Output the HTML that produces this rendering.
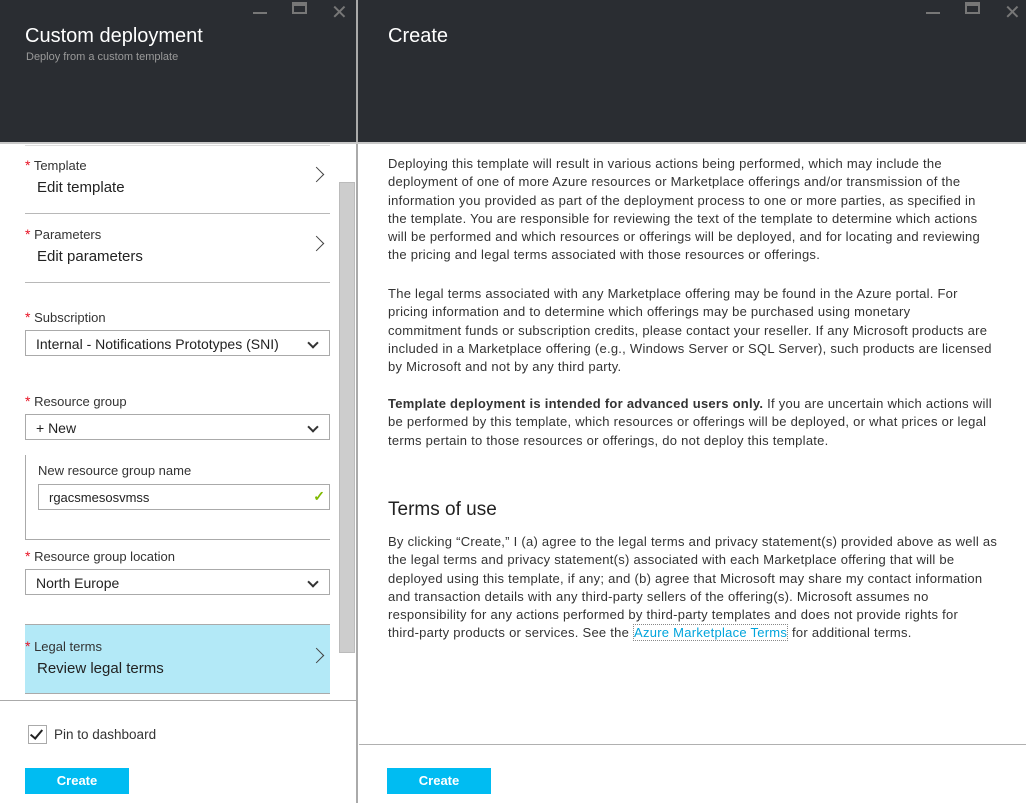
<!DOCTYPE html>
<html><head><meta charset="utf-8"><style>
*{margin:0;padding:0;box-sizing:border-box}
body{width:1026px;height:803px;position:relative;overflow:hidden;background:#fff;font-family:"Liberation Sans",sans-serif;color:#222}
.a{position:absolute}
.hdr{background:#2a2d32;top:0;height:142px}
.t{color:#fff;font-size:20px;white-space:nowrap}
.lbl{font-size:13px;color:#333;white-space:nowrap}
.big{font-size:15px;color:#222;white-space:nowrap}
.star{color:#e81123;font-size:14px}
.sep{height:1px;background:#b8b8b8;left:25px;width:305px}
.dd{left:25px;width:305px;height:26px;border:1px solid #aaa;font-size:14px;padding:5px 0 0 10px;white-space:nowrap;color:#222}
.chev{position:absolute;right:12px;top:8px;width:8px;height:8px;border-right:2px solid #333;border-bottom:2px solid #333;transform:rotate(45deg)}
.arr{position:absolute;width:11px;height:11px;border-right:1px solid #444;border-top:1px solid #444;transform:rotate(45deg)}
.p{left:388px;font-size:13px;letter-spacing:0.26px;line-height:18.3px;color:#333;white-space:nowrap}
.btn{background:#00bcf2;color:#fff;font-size:13px;font-weight:bold;text-align:center;line-height:26px;width:104px;height:26px}
</style></head><body>
<div class="a hdr" style="left:0;width:356px"></div>
<div class="a hdr" style="left:358px;width:668px"></div>
<div class="a" style="left:356px;top:0;width:2px;height:803px;background:#aaa"></div>
<div class="a" style="left:0;top:142px;width:1026px;height:2px;background:#c8c8c8"></div>
<div class="a" style="left:253px;top:12px;width:14px;height:2px;background:#777"></div>
<div class="a" style="left:292px;top:2px;width:15px;height:12px;border:2px solid #777;border-top-width:4px"></div>
<div class="a" style="left:331px;top:0;color:#777;font-size:20px">✕</div>
<div class="a" style="left:926px;top:12px;width:14px;height:2px;background:#777"></div>
<div class="a" style="left:965px;top:2px;width:15px;height:12px;border:2px solid #777;border-top-width:4px"></div>
<div class="a" style="left:1004px;top:0;color:#777;font-size:20px">✕</div>

<div class="a t" style="left:25px;top:25px">Custom deployment</div>
<div class="a" style="left:26px;top:51px;color:#9a9a9a;font-size:11px">Deploy from a custom template</div>
<div class="a t" style="left:388px;top:25px">Create</div>

<div class="a sep" style="top:145px;background:#ddd"></div>
<div class="a lbl" style="left:25px;top:157px"><span class="star">*</span> Template</div>
<div class="a big" style="left:37px;top:179px">Edit template</div>
<div class="arr" style="left:311px;top:169px"></div>
<div class="a sep" style="top:213px"></div>
<div class="a lbl" style="left:25px;top:226px"><span class="star">*</span> Parameters</div>
<div class="a big" style="left:37px;top:248px">Edit parameters</div>
<div class="arr" style="left:311px;top:238px"></div>
<div class="a sep" style="top:282px"></div>
<div class="a lbl" style="left:25px;top:309px"><span class="star">*</span> Subscription</div>
<div class="a dd" style="top:330px">Internal - Notifications Prototypes (SNI)<div class="chev"></div></div>
<div class="a lbl" style="left:25px;top:393px"><span class="star">*</span> Resource group</div>
<div class="a dd" style="top:414px">+ New<div class="chev"></div></div>
<div class="a" style="left:25px;top:455px;width:305px;height:85px;border-left:1px solid #aaa;border-bottom:1px solid #aaa"></div>
<div class="a lbl" style="left:38px;top:463px">New resource group name</div>
<div class="a dd" style="left:38px;width:292px;top:484px;font-size:13px">rgacsmesosvmss<span style="position:absolute;right:4px;top:3px;color:#7fba00;font-size:14px;font-weight:bold">✓</span></div>
<div class="a lbl" style="left:25px;top:548px"><span class="star">*</span> Resource group location</div>
<div class="a dd" style="top:569px">North Europe<div class="chev"></div></div>
<div class="a" style="left:25px;top:624px;width:305px;height:70px;background:#b3e9f7;border-top:1px solid #aaa;border-bottom:1px solid #aaa"></div>
<div class="a lbl" style="left:25px;top:638px"><span class="star">*</span> Legal terms</div>
<div class="a big" style="left:37px;top:660px">Review legal terms</div>
<div class="arr" style="left:311px;top:650px;border-color:#444"></div>
<div class="a" style="left:339px;top:182px;width:16px;height:471px;background:#cdcdcd;border:1px solid #bbb"></div>
<div class="a" style="left:0;top:700px;width:356px;height:1px;background:#aaa"></div>
<div class="a" style="left:28px;top:725px;width:19px;height:19px;border:1px solid #aaa"></div>
<div class="a" style="left:33px;top:727px;width:7px;height:12px;border-right:2px solid #222;border-bottom:2px solid #222;transform:rotate(40deg)"></div>
<div class="a lbl" style="left:54px;top:727px;font-size:13.5px">Pin to dashboard</div>
<div class="a btn" style="left:25px;top:768px">Create</div>

<div class="a p" style="top:155px">Deploying this template will result in various actions being performed, which may include the<br>deployment of one of more Azure resources or Marketplace offerings and/or transmission of the<br>information you provided as part of the deployment process to one or more parties, as specified in<br>the template. You are responsible for reviewing the text of the template to determine which actions<br>will be performed and which resources or offerings will be deployed, and for locating and reviewing<br>the pricing and legal terms associated with those resources or offerings.</div>
<div class="a p" style="top:285px">The legal terms associated with any Marketplace offering may be found in the Azure portal. For<br>pricing information and to determine which offerings may be purchased using monetary<br>commitment funds or subscription credits, please contact your reseller. If any Microsoft products are<br>included in a Marketplace offering (e.g., Windows Server or SQL Server), such products are licensed<br>by Microsoft and not by any third party.</div>
<div class="a p" style="top:395px"><b>Template deployment is intended for advanced users only.</b> If you are uncertain which actions will<br>be performed by this template, which resources or offerings will be deployed, or what prices or legal<br>terms pertain to those resources or offerings, do not deploy this template.</div>
<div class="a" style="left:388px;top:499px;font-size:19px;color:#222">Terms of use</div>
<div class="a p" style="top:533px">By clicking “Create,” I (a) agree to the legal terms and privacy statement(s) provided above as well as<br>the legal terms and privacy statement(s) associated with each Marketplace offering that will be<br>deployed using this template, if any; and (b) agree that Microsoft may share my contact information<br>and transaction details with any third-party sellers of the offering(s). Microsoft assumes no<br>responsibility for any actions performed by third-party templates and does not provide rights for<br>third-party products or services. See the <span style="color:#00a4dc;border:1px dotted #888">Azure Marketplace Terms</span> for additional terms.</div>
<div class="a" style="left:359px;top:744px;width:667px;height:1px;background:#b0b0b0"></div>
<div class="a btn" style="left:387px;top:768px">Create</div>
</body></html>
